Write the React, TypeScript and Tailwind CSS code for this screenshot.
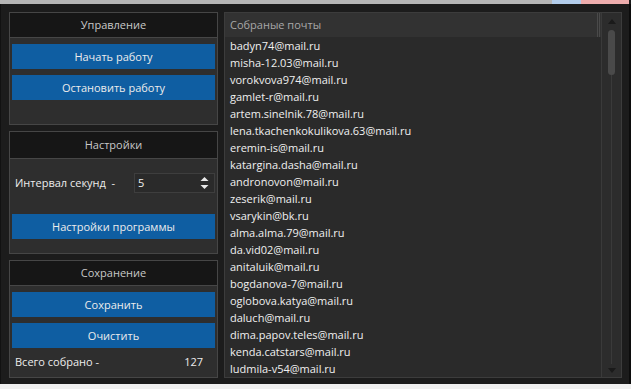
const emails = [
  'badyn74@mail.ru',
  'misha-12.03@mail.ru',
  'vorokvova974@mail.ru',
  'gamlet-r@mail.ru',
  'artem.sinelnik.78@mail.ru',
  'lena.tkachenkokulikova.63@mail.ru',
  'eremin-is@mail.ru',
  'katargina.dasha@mail.ru',
  'andronovon@mail.ru',
  'zeserik@mail.ru',
  'vsarykin@bk.ru',
  'alma.alma.79@mail.ru',
  'da.vid02@mail.ru',
  'anitaluik@mail.ru',
  'bogdanova-7@mail.ru',
  'oglobova.katya@mail.ru',
  'daluch@mail.ru',
  'dima.papov.teles@mail.ru',
  'kenda.catstars@mail.ru',
  'ludmila-v54@mail.ru',
];

const Btn = ({ label }: { label: string }) => (
  <button className="mx-[2px] h-[25px] w-[203px] bg-[#0f5ea2] text-[#ececec] text-[11px] leading-[25px]">
    {label}
  </button>
);

const Group = ({
  title,
  height,
  headH,
  children,
}: {
  title: string;
  height: string;
  headH: string;
  children: React.ReactNode;
}) => (
  <div className={`${height} flex flex-col border border-[#464646] bg-[#2e2e2e]`}>
    <div className={`${headH} flex items-center justify-center border-b border-[#464646] bg-[#161616] text-[11px] text-[#c8c8c8]`}>
      {title}
    </div>
    {children}
  </div>
);

export default function App() {
  return (
    <div className="flex h-[389px] w-[631px] flex-col bg-[#1c1c1c] font-['Open_Sans','Noto_Sans',sans-serif]">
      <div className="flex h-[4px]">
        <div className="flex-1 bg-[#b6b6b6]" />
        <div className="w-[29px] bg-[#b3cdeb]" />
        <div className="w-[48px] bg-[#eeadad]" />
        <div className="w-[2px] bg-[#1c1c1c]" />
      </div>

      <div className="flex flex-1 border-l border-[#111]">
        <div className="flex flex-1 gap-[6px] pl-[8px] pt-[8px]">
          {/* left column */}
          <div className="flex w-[209px] flex-col gap-[6px]">
            <Group title="Управление" height="h-[113px]" headH="h-[25px]">
              <div className="flex flex-col gap-[6px] pt-[6px]">
                <Btn label="Начать работу" />
                <Btn label="Остановить работу" />
              </div>
            </Group>

            <Group title="Настройки" height="h-[123px]" headH="h-[27px]">
              <div className="flex flex-col pt-[14px]">
                <div className="flex h-[20px] items-center">
                  <span className="w-[124px] pl-[5px] text-[11px] text-[#ececec]">Интервал секунд&nbsp; -</span>
                  <div className="flex h-[20px] w-[81px] items-center justify-between border border-[#3e3e3e] bg-[#2a2a2a] pl-[3px] pr-[5px]">
                    <span className="text-[11px] text-[#f0f0f0]">5</span>
                    <svg width="9" height="14" viewBox="0 0 9 14">
                      <path d="M4.5 1 L8.5 5 L0.5 5 Z" fill="#e8e8e8" />
                      <path d="M4.5 13 L8.5 9 L0.5 9 Z" fill="#e8e8e8" />
                    </svg>
                  </div>
                </div>
                <div className="pt-[20px]">
                  <Btn label="Настройки программы" />
                </div>
              </div>
            </Group>

            <Group title="Сохранение" height="h-[118px]" headH="h-[25px]">
              <div className="flex flex-col gap-[6px] pt-[6px]">
                <Btn label="Сохранить" />
                <Btn label="Очистить" />
                <div className="flex h-[16px] items-center justify-between pl-[5px] pr-[14px] text-[11px] text-[#ececec]">
                  <span>Всего собрано -</span>
                  <span>127</span>
                </div>
              </div>
            </Group>
          </div>

          {/* emails list */}
          <div className="mb-[6px] flex w-[398px] border border-[#3c3c3c] bg-[#2a2a2a]">
            <div className="flex flex-1 flex-col">
              <div className="flex h-[24px] items-center bg-[#323232]">
                <span className="flex-1 pl-[5px] text-[11px] text-[#a8a8a8]">Собраные почты</span>
                <div className="mr-[1px] h-full w-[3px] border-x border-[#4a4a4a]" />
              </div>
              <div className="flex flex-col">
                {emails.map((e) => (
                  <div key={e} className="h-[17px] pl-[5px] text-[11px] leading-[17px] text-[#f0f0f0]">
                    {e}
                  </div>
                ))}
              </div>
            </div>
            <div className="flex w-[20px] flex-col items-center border-l border-[#3a3a3a] bg-[#2c2c2c] pb-[4px] pt-[6px]">
              <svg width="8" height="5" viewBox="0 0 8 5">
                <path d="M4 0 L8 5 L0 5 Z" fill="#1a1a1a" />
              </svg>
              <div className="mt-[6px] h-[45px] w-[7px] rounded-full bg-[#4a4a4a]" />
              <div className="w-px flex-1 bg-[#3a3a3a]" />
              <svg width="8" height="5" viewBox="0 0 8 5" className="mt-[4px]">
                <path d="M0 0 L8 0 L4 5 Z" fill="#1a1a1a" />
              </svg>
            </div>
          </div>
        </div>
        <div className="w-[7px]" />
        <div className="w-[2px] bg-[#0c0c0c]" />
      </div>

      <div className="h-[5px] bg-[#f0f0f0]" />
    </div>
  );
}
